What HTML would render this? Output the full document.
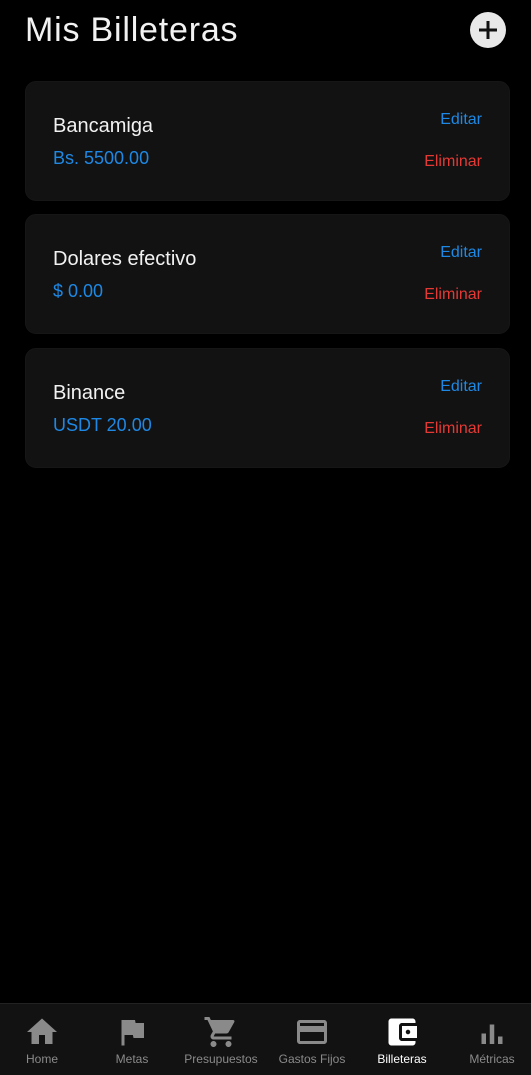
<!DOCTYPE html>
<html><head><meta charset="utf-8"><style>
*{margin:0;padding:0;box-sizing:border-box}
body{width:531px;height:1075px;background:#000;font-family:"Liberation Sans",sans-serif;position:relative;overflow:hidden;color:#fff}
h1{position:absolute;left:25px;top:11px;font-size:34px;font-weight:400;color:#f2f2f2;letter-spacing:0.8px}
.plus{position:absolute;left:470px;top:12px;width:36px;height:36px;border-radius:50%;background:#e8e8e8}
.plus:before,.plus:after{content:"";position:absolute;background:#111;left:50%;top:50%;transform:translate(-50%,-50%)}
.plus:before{width:18px;height:3px}.plus:after{width:3px;height:18px}
.card{position:absolute;left:25px;width:485px;height:120px;background:#121212;border-radius:11px;border:1px solid #161616}
.name{position:absolute;left:27px;top:33px;font-size:20px;color:#f2f2f2}
.amt{position:absolute;left:27px;top:66px;font-size:18px;color:#1e88e5}
.ed{position:absolute;right:27px;top:29px;font-size:16px;color:#1e88e5}
.el{position:absolute;right:27px;top:71px;font-size:16px;color:#e53935}
.tab{position:absolute;left:0;top:1003px;width:531px;height:72px;background:#121212;border-top:1px solid #222}
.it{position:absolute;top:0;width:88px;text-align:center;font-size:12px;color:#8a8a8a}
.it svg{display:block;margin:10px auto 2px;width:36px;height:36px}
</style></head><body>
<h1>Mis Billeteras</h1>
<div class="plus"></div>
<div class="card" style="top:81px"><div class="name">Bancamiga</div><div class="amt">Bs. 5500.00</div><div class="ed">Editar</div><div class="el">Eliminar</div></div>
<div class="card" style="top:214px"><div class="name">Dolares efectivo</div><div class="amt">$ 0.00</div><div class="ed">Editar</div><div class="el">Eliminar</div></div>
<div class="card" style="top:348px"><div class="name">Binance</div><div class="amt">USDT 20.00</div><div class="ed">Editar</div><div class="el">Eliminar</div></div>
<div class="tab">
<div class="it" style="left:-2px"><svg viewBox="0 0 24 24"><path fill="#8a8a8a" d="M10 20v-6h4v6h5v-8h3L12 3 2 12h3v8z"/></svg>Home</div>
<div class="it" style="left:88px"><svg viewBox="0 0 24 24"><path fill="#8a8a8a" d="M14.4 6L14 4H5v17h2v-7h5.6l.4 2h7V6z"/></svg>Metas</div>
<div class="it" style="left:177px"><svg viewBox="0 0 24 24"><path fill="#8a8a8a" d="M7 18c-1.1 0-2 .9-2 2s.9 2 2 2 2-.9 2-2-.9-2-2-2zM1 2v2h2l3.6 7.6-1.4 2.4c-.1.3-.2.6-.2 1 0 1.1.9 2 2 2h12v-2H7.4c-.1 0-.2-.1-.2-.2v-.1l.9-1.7h7.4c.8 0 1.4-.4 1.7-1l3.6-6.5c.1-.2.2-.3.2-.5 0-.6-.4-1-1-1H5.2l-.9-2H1zm16 16c-1.1 0-2 .9-2 2s.9 2 2 2 2-.9 2-2-.9-2-2-2z"/></svg>Presupuestos</div>
<div class="it" style="left:268px"><svg viewBox="0 0 24 24"><path fill="#8a8a8a" d="M20 4H4c-1.1 0-2 .9-2 2v12c0 1.1.9 2 2 2h16c1.1 0 2-.9 2-2V6c0-1.1-.9-2-2-2zm0 14H4v-6h16v6zm0-10H4V6h16v2z"/></svg>Gastos Fijos</div>
<div class="it" style="left:358px;color:#fff"><svg viewBox="0 0 24 24"><path fill="#fff" d="M21 18v1c0 1.1-.9 2-2 2H5c-1.1 0-2-.9-2-2V5c0-1.1.9-2 2-2h14c1.1 0 2 .9 2 2v1h-9c-1.1 0-2 .9-2 2v8c0 1.1.9 2 2 2h9zm-9-2h10V8H12v8zm4-2.5c-.8 0-1.5-.7-1.5-1.5s.7-1.5 1.5-1.5 1.5.7 1.5 1.5-.7 1.5-1.5 1.5z"/></svg>Billeteras</div>
<div class="it" style="left:448px"><svg viewBox="0 0 24 24"><path fill="#8a8a8a" d="M5 13h3v7H5zM10.5 7h3v13h-3zM16 15h3v5h-3z"/></svg>Métricas</div>
</div>
</body></html>
